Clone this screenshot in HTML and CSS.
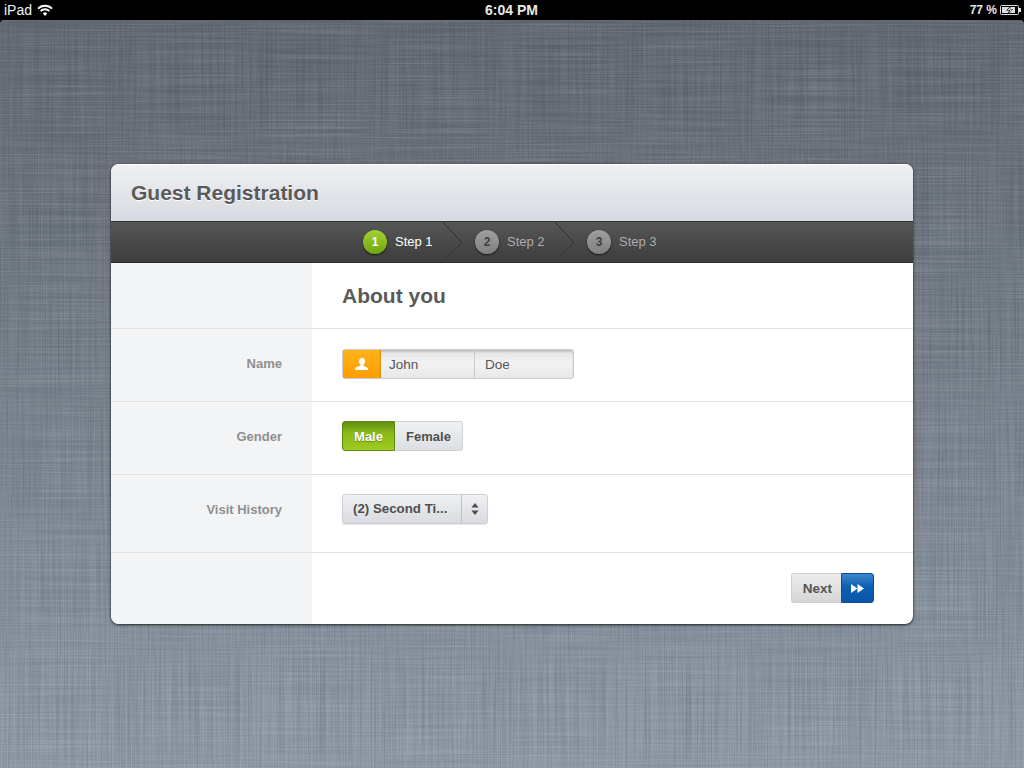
FILE: index.html
```html
<!DOCTYPE html>
<html lang="en">
<head>
<meta charset="utf-8">
<title>Guest Registration</title>
<link rel="stylesheet" href="styles.css">
</head>
<body>
<div class="statusbar">
  <div class="status-left"><span>iPad</span>
    <svg class="wifi" width="16" height="12" viewBox="0 0 16 12"><path d="M1 4.600a10 10 0 0 1 14 0" fill="none" stroke="#fff" stroke-width="1.800"/><path d="M3.600 7a6.400 6.400 0 0 1 8.800 0" fill="none" stroke="#fff" stroke-width="1.800"/><path d="M8 12l-2.200-2.600a3.200 3.200 0 0 1 4.400 0z" fill="#fff"/></svg>
  </div>
  <div class="status-time">6:04 PM</div>
  <div class="status-right"><span>77 %</span>
    <svg width="21" height="10" viewBox="0 0 21 10"><rect x=".5" y=".5" width="18" height="9" rx="1" fill="none" stroke="#ddd"/><rect x="19" y="3" width="2" height="4" fill="#ddd"/><rect x="2" y="2" width="13" height="6" fill="#ddd"/><path d="M11 .5L6 5.500h3L7.500 9.500l5.500-5.500h-3z" fill="#000"/><path d="M10.500 2L7.500 5h2.600l-1 2.500 3-3h-2.600z" fill="#fff"/></svg>
  </div>
</div>
<main class="stage">
  <section class="card">
    <header class="card-head"><h1>Guest Registration</h1></header>
    <nav class="steps">
      <div class="step active"><span class="num">1</span><span class="lbl">Step 1</span><svg class="chev" width="20" height="41" viewBox="0 0 20 41"><path d="M0 0l19 20.500L0 41" fill="none" stroke="#2b2b2b"/><path d="M1 0l19 20.500L1 41" fill="none" stroke="#5d5d5d" opacity=".45"/></svg></div>
      <div class="step"><span class="num">2</span><span class="lbl">Step 2</span><svg class="chev" width="20" height="41" viewBox="0 0 20 41"><path d="M0 0l19 20.500L0 41" fill="none" stroke="#2b2b2b"/><path d="M1 0l19 20.500L1 41" fill="none" stroke="#5d5d5d" opacity=".45"/></svg></div>
      <div class="step"><span class="num">3</span><span class="lbl">Step 3</span></div>
    </nav>
    <div class="row row-title"><div class="side"></div><div class="main"><h2>About you</h2></div></div>
    <div class="row row-name">
      <div class="side"><label>Name</label></div>
      <div class="main">
        <div class="namefield">
          <span class="addon"><svg width="14" height="12" viewBox="0 0 14 12"><path d="M7 0c2 0 3 1.400 3 3.200 0 1.400-.7 2.600-1.400 3.200v1c0 .8 1 .9 2.400 1.500 1.300.5 2 1 2 2.100v1H0v-1c0-1.100.7-1.600 2-2.100C3.400 8.300 5.400 8.200 5.400 7.400v-1C4.700 5.800 4 4.600 4 3.200 4 1.400 5 0 7 0z" fill="#fff"/></svg></span>
          <span class="input first">John</span>
          <span class="input last">Doe</span>
        </div>
      </div>
    </div>
    <div class="row row-gender">
      <div class="side"><label>Gender</label></div>
      <div class="main">
        <div class="toggle"><span class="opt on">Male</span><span class="opt off">Female</span></div>
      </div>
    </div>
    <div class="row row-visit">
      <div class="side"><label>Visit History</label></div>
      <div class="main">
        <div class="select"><span class="sel-text">(2) Second Ti...</span><span class="sel-arrows"><svg width="8" height="12" viewBox="0 0 8 12"><path d="M4 0l3.600 4.500H.4z M4 12L.4 7.500h7.200z" fill="#4f4f4f"/></svg></span></div>
      </div>
    </div>
    <div class="row row-foot">
      <div class="side"></div>
      <div class="main foot">
        <div class="next"><span class="next-text">Next</span><span class="next-btn"><svg width="13" height="9" viewBox="0 0 13 9"><path d="M0 0l6.500 4.500L0 9z M6.500 0L13 4.500 6.500 9z" fill="#fff"/></svg></span></div>
      </div>
    </div>
  </section>
</main>
</body>
</html>
```
FILE: styles.css
```css
* { box-sizing: border-box; }
html, body { margin: 0; padding: 0; width: 1024px; height: 768px; overflow: hidden; background: #000; }
body { font-family: "Liberation Sans", Arial, sans-serif; color: #555; }

.statusbar { height: 20px; background: #000; color: #f2f2f2; display: grid; grid-template-columns: 1fr auto 1fr; align-items: center; padding: 0 3px 0 4px; font-size: 14px; line-height: 20px; }
.status-left { display: flex; align-items: center; gap: 5px; }
.wifi { margin-top: -1px; }
.status-time { font-weight: 700; font-size: 14px; color: #e8e8e8; margin-left: -2px; }
.status-right { display: flex; justify-content: flex-end; align-items: center; gap: 3px; font-size: 12px; font-weight: 700; color: #e4e4e4; }

.stage {
  height: 748px; padding-top: 144px; border-radius: 4px 4px 0 0;
  background:
    url("data:image/svg+xml,%3Csvg xmlns='http://www.w3.org/2000/svg' width='1024' height='748'%3E%3Cfilter id='h' x='0' y='0' width='100%25' height='100%25' color-interpolation-filters='sRGB'%3E%3CfeTurbulence type='fractalNoise' baseFrequency='0.008 0.7' numOctaves='2' seed='4'/%3E%3CfeColorMatrix values='0 0 0 0 1 0 0 0 0 1 0 0 0 0 1 0.28 0 0 0 -0.1'/%3E%3C/filter%3E%3Cfilter id='v' x='0' y='0' width='100%25' height='100%25' color-interpolation-filters='sRGB'%3E%3CfeTurbulence type='fractalNoise' baseFrequency='0.7 0.008' numOctaves='2' seed='9'/%3E%3CfeColorMatrix values='0 0 0 0 0.1 0 0 0 0 0.12 0 0 0 0 0.15 0 0.32 0 0 -0.11'/%3E%3C/filter%3E%3Crect width='1024' height='748' filter='url(%23h)'/%3E%3Crect width='1024' height='748' filter='url(%23v)'/%3E%3C/svg%3E"),
    linear-gradient(180deg, #5f6770 0%, #6a737d 25%, #7c8692 60%, #8f9aa8 100%);
}

.card { width: 802px; height: 460px; margin: 0 auto; background: #fff; border-radius: 8px; box-shadow: 0 1px 3px rgba(0,0,0,.75), 0 0 1px rgba(0,0,0,.6); overflow: hidden; display: flex; flex-direction: column; }

.card-head { height: 57px; padding: 0 20px; display: flex; align-items: center; background: linear-gradient(180deg, #eff0f4 0%, #d7dae0 100%); border-top: 1px solid #fff; }
h1 { margin: 0; font-size: 21px; line-height: 56px; font-weight: 700; color: #5a5a5a; text-shadow: 0 1px 0 #fff; }

.steps { height: 42px; display: flex; justify-content: center; background: linear-gradient(180deg, #565656 0%, #3d3d3d 100%); border-top: 1px solid #303238; border-bottom: 1px solid #2c2c2c; }
.step { width: 112px; position: relative; display: flex; align-items: center; white-space: nowrap; }
.step:last-child { width: 74px; }
.num { width: 24px; height: 24px; border-radius: 50%; display: flex; align-items: center; justify-content: center; font-size: 12px; font-weight: 700; color: #3f3f3f; background: linear-gradient(180deg, #9e9e9e, #808080); box-shadow: 0 1px 2px rgba(0,0,0,.7); flex: none; }
.lbl { margin: 0 0 2px 8px; font-size: 13px; color: #adadad; }
.chev { position: absolute; left: 80px; top: 0; }
.active .num { color: #fff; background: linear-gradient(180deg, #a3d033 0%, #6ea70e 100%); }
.active .lbl { color: #fff; }

.row { display: grid; grid-template-columns: 201px 1fr; border-bottom: 1px solid #e1e1e1; }
.side { background: #f3f4f6; display: flex; align-items: center; justify-content: flex-end; padding-right: 30px; }
.main { display: flex; align-items: center; padding-left: 30px; }
label { font-size: 13px; font-weight: 700; color: #8f8f8f; }
.row-title { height: 66px; }
.row-name { height: 73px; }
.row-name .main { padding-bottom: 2px; }
.row-name .side { padding-bottom: 4px; }
.row-gender { height: 73px; }
.row-gender .main, .row-gender .side { padding-bottom: 4px; }
.row-visit { height: 78px; }
.row-visit .main { padding-bottom: 10px; }
.row-visit .side { padding-bottom: 8px; }
.row-foot { flex: 1; border-bottom: 0; }
h2 { margin: 0; font-size: 21px; font-weight: 700; color: #5a5a5a; }

.namefield { display: flex; width: 232px; height: 30px; border-radius: 3px; border: 1px solid #cbcbcb; box-shadow: inset 0 2px 2px rgba(0,0,0,.14); overflow: hidden; background: linear-gradient(180deg, #e2e2e2, #f3f3f3 45%, #e8e8e8); }
.addon { width: 39px; margin: -1px 0 -1px -1px; background: linear-gradient(180deg, #ffb31a, #ff9d00); border: 1px solid #d98e0b; display: flex; align-items: center; justify-content: center; flex: none; border-radius: 3px 0 0 3px; }
.input { font-size: 13.500px; color: #555; display: flex; align-items: center; }
.input.first { width: 94px; padding-left: 8px; border-right: 1px solid #c9c9c9; }
.input.last { flex: 1; padding-left: 10px; }

.toggle { display: flex; height: 30px; }
.opt { font-size: 13px; font-weight: 700; display: flex; align-items: center; justify-content: center; }
.on { width: 53px; color: #fff; border: 1px solid #5d8a10; border-radius: 3px 0 0 3px; background: linear-gradient(180deg, #5f8f10, #8cb81a 40%, #a0cb21); text-shadow: 0 1px 1px rgba(0,0,0,.3); }
.off { width: 68px; color: #4f4f4f; border: 1px solid #d0d2d6; border-left: 0; border-radius: 0 3px 3px 0; background: linear-gradient(180deg, #f0f1f3, #dcdee3); }

.select { display: flex; width: 146px; height: 30px; border: 1px solid #cdcfd3; border-radius: 3px; background: linear-gradient(180deg, #f0f1f3, #d9dbe0); box-shadow: 0 1px 1px rgba(0,0,0,.1); }
.sel-text { width: 119px; padding-left: 10px; font-size: 13.300px; font-weight: 700; color: #4f4f4f; display: flex; align-items: center; border-right: 1px solid #bfc1c6; white-space: nowrap; }
.sel-arrows { flex: 1; display: flex; align-items: center; justify-content: center; }

.foot { justify-content: flex-end; padding-right: 39px; }
.next { display: flex; height: 30px; margin-top: -1px; }
.next-text { width: 50px; padding-left: 2px; font-size: 13.500px; font-weight: 700; color: #555; display: flex; align-items: center; justify-content: center; border: 1px solid #cfcfcf; border-right: 0; border-radius: 3px 0 0 3px; background: linear-gradient(180deg, #ececec, #d6d6d6); }
.next-btn { width: 33px; display: flex; align-items: center; justify-content: center; border: 1px solid #0a4c9c; border-radius: 0 3px 3px 0; background: linear-gradient(180deg, #3e86c9, #0f5fb4 45%, #0a56a8); }
```
